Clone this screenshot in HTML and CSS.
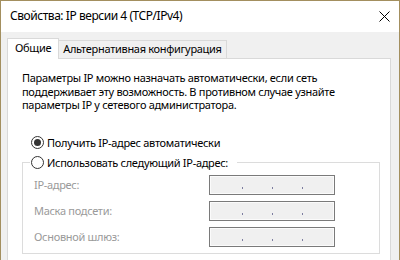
FILE: index.html
```html
<!DOCTYPE html>
<html lang="ru">
<head>
<meta charset="utf-8">
<title>Свойства: IP версии 4 (TCP/IPv4)</title>
<link rel="stylesheet" href="styles.css">
</head>
<body>
<div class="window">
  <div class="titlebar">
    <span class="title">Свойства: IP версии 4 (TCP/IPv4)</span>
    <svg class="close" width="11" height="11" viewBox="0 0 11 11"><path d="M0.5 0.5 L10.5 10.5 M10.5 0.5 L0.5 10.5" stroke="#000" stroke-width="1" fill="none"/></svg>
  </div>
  <div class="client">
    <div class="tabs">
      <div class="tab active">Общие</div>
      <div class="tab">Альтернативная конфигурация</div>
    </div>
    <div class="panel">
      <p class="intro">Параметры IP можно назначать автоматически, если сеть<br>поддерживает эту возможность. В противном случае узнайте<br>параметры IP у сетевого администратора.</p>
      <div class="radio first"><span class="circle checked"></span><span>Получить IP-адрес автоматически</span></div>
      <fieldset class="group">
        <legend><span class="radio"><span class="circle"></span><span>Использовать следующий IP-адрес:</span></span></legend>
        <div class="row"><span class="lbl">IP-адрес:</span><div class="ip"><i></i><i></i><i></i></div></div>
        <div class="row"><span class="lbl">Маска подсети:</span><div class="ip"><i></i><i></i><i></i></div></div>
        <div class="row"><span class="lbl">Основной шлюз:</span><div class="ip"><i></i><i></i><i></i></div></div>
      </fieldset>
    </div>
  </div>
</div>
</body>
</html>
```
FILE: styles.css
```css
html, body {
  margin: 0;
  padding: 0;
  background: #f0f0f0;
}
body {
  font-family: "Noto Sans", "Open Sans", sans-serif;
  font-size: 11px;
  letter-spacing: -0.3px;
  color: #000;
}
.window {
  width: 400px;
  height: 260px;
  box-sizing: border-box;
  border: 1px solid #a38f5f;
  border-bottom: none;
  overflow: hidden;
  background: #f0f0f0;
}
.titlebar {
  height: 31px;
  background: #fff;
  display: flex;
  align-items: center;
  justify-content: space-between;
  padding: 0 9px 0 9px;
}
.title {
  font-size: 12px;
  letter-spacing: -0.45px;
  line-height: 16px;
  margin-top: -1px;
}
.close {
  display: block;
  margin-top: -1px;
}
.client {
  padding: 6px 8px 0 6px;
}
.tabs {
  display: flex;
  align-items: flex-end;
  height: 20px;
}
.tab {
  box-sizing: border-box;
  height: 18px;
  border: 1px solid #d9d9d9;
  border-bottom: none;
  padding: 0 4px;
  line-height: 16px;
  background: #f0f0f0;
  margin-left: -1px;
  white-space: nowrap;
}
.tab.active {
  margin-left: 0;
  height: 21px;
  margin-bottom: -1px;
  background: #fff;
  padding: 0 7px;
  line-height: 18px;
  position: relative;
  z-index: 1;
}
.panel {
  width: 384px;
  height: 220px;
  box-sizing: border-box;
  background: #fff;
  border: 1px solid #d9d9d9;
  padding: 0 10px 0 14px;
}
.intro {
  margin: 12px 0 0 0;
  line-height: 13.5px;
  white-space: nowrap;
}
.radio {
  display: flex;
  align-items: center;
  gap: 3px;
  line-height: 14px;
  white-space: nowrap;
}
.radio.first {
  margin: 24px 0 0 9px;
}
.circle {
  width: 13px;
  height: 13px;
  box-sizing: border-box;
  border: 1px solid #333;
  border-radius: 50%;
  background: #fff;
  display: flex;
  align-items: center;
  justify-content: center;
  flex: none;
}
.circle.checked::after {
  content: "";
  width: 7px;
  height: 7px;
  border-radius: 50%;
  background: #333;
}
.group {
  margin: 6px 0 0 0;
  padding: 0 0 6px 11px;
  border: 1px solid #dcdcdc;
}
.group legend {
  margin-left: -4px;
  padding: 0 9px 0 1px;
}
.row {
  display: flex;
  align-items: center;
  height: 20px;
  margin-top: 6px;
}
.group legend + .row {
  margin-top: 5px;
}
.lbl {
  width: 175px;
  color: #9a9a9a;
  white-space: nowrap;
}
.ip {
  box-sizing: border-box;
  width: 126px;
  height: 20px;
  border: 1px solid #7a7a7a;
  box-shadow: inset 0 0 0 1px #fbfbfb;
  background: #f0f0f0;
  display: flex;
  align-items: flex-start;
  gap: 29px;
  padding: 11px 0 0 32px;
}
.ip i {
  display: block;
  width: 1px;
  height: 2px;
  background: #7d7da0;
}
```
